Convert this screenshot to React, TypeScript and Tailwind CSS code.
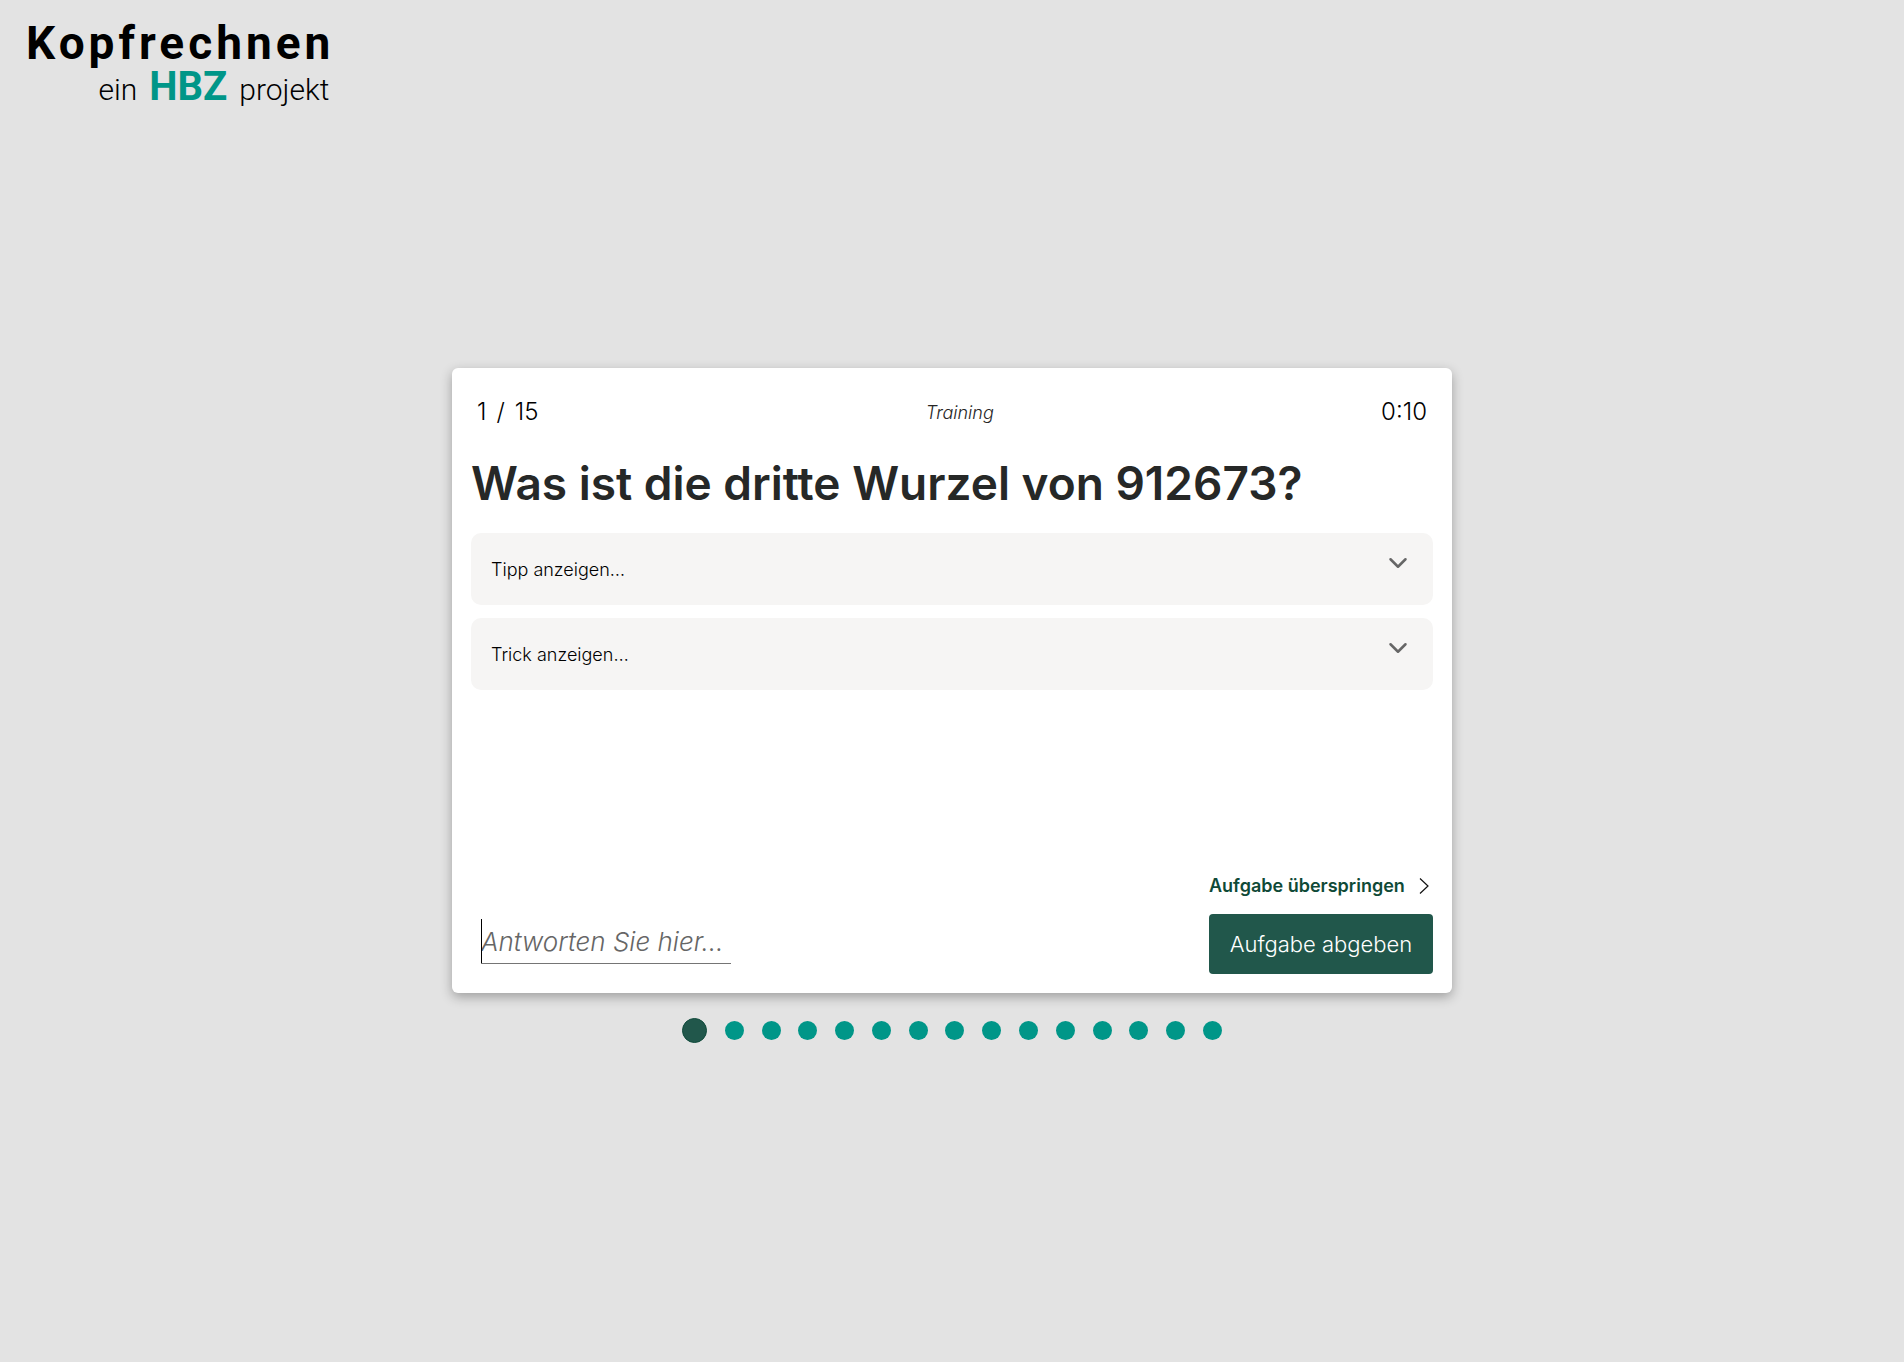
import { ChevronDown } from "lucide-react";

const TASK_COUNT = 15;
const CURRENT_TASK = 1;

function Logo() {
  return (
    <a href="#" className="flex w-fit flex-col items-end pt-[17px] pl-[26px] font-[Roboto,sans-serif] text-black">
      <span className="text-[46px] leading-[52px] font-bold tracking-[4px]">Kopfrechnen</span>
      <span className="flex items-baseline gap-3 pr-[5px] text-[30px] leading-9 font-light">
        ein <strong className="text-[40px] font-bold text-[#009688]">HBZ</strong> projekt
      </span>
    </a>
  );
}

function Hint({ label }: { label: string }) {
  return (
    <button
      type="button"
      aria-expanded="false"
      className="flex h-[72px] w-full items-center justify-between rounded-[10px] bg-[#f6f5f4] px-5 text-left text-[18px] font-light text-black"
    >
      {label}
      <ChevronDown className="mb-3 size-[30px] text-[#666]" strokeWidth={2} />
    </button>
  );
}

export default function App() {
  return (
    <div className="grid min-h-screen grid-rows-[1fr_auto_1fr] justify-items-center bg-[#e3e3e3] pb-px font-[Inter,sans-serif]">
      <header className="w-full">
        <Logo />
      </header>

      <main className="flex min-h-[625px] w-full max-w-[1000px] flex-col rounded-md bg-white p-[19px] shadow-[0_4px_12px_rgba(0,0,0,0.3)]">
        <div className="flex h-[50px] items-center justify-between px-1.5 text-[24px] font-light text-black">
          <span className="flex gap-2.5">
            <span>{CURRENT_TASK}</span>
            <span>/</span>
            <span>{TASK_COUNT}</span>
          </span>
          <em className="text-[18px] text-[#262626]">Training</em>
          <time>0:10</time>
        </div>

        <h1 className="pt-4 text-[46px] leading-[60px] font-semibold text-[#262827]">
          Was ist die dritte Wurzel von 912673?
        </h1>

        <div className="mt-5 flex flex-col gap-[13px]">
          <Hint label="Tipp anzeigen…" />
          <Hint label="Trick anzeigen…" />
        </div>

        <form className="mt-auto flex items-end justify-between" onSubmit={(e) => e.preventDefault()}>
          <div className="relative mb-2.5 ml-2.5">
            <input
              type="text"
              aria-label="Antwort"
              placeholder="Antworten Sie hier…"
              className="h-[45px] w-[250px] border-b border-[#757575] bg-transparent text-[26px] font-light italic outline-none placeholder:text-[#666]"
            />
            <span className="absolute top-0 left-0 h-11 w-px bg-black" />
          </div>
          <div className="flex flex-col gap-3">
            <button type="button" className="flex items-center justify-between pr-1 text-[18px] leading-8 font-semibold text-[#0f4a37]">
              Aufgabe überspringen
              <svg viewBox="0 0 10 18" className="h-[18px] w-2.5" fill="none" stroke="#111" strokeWidth="1.2">
                <path d="M1 1.5 9 9 1 16.5" />
              </svg>
            </button>
            <button type="submit" className="h-[60px] w-[224px] rounded bg-[#21574b] text-[22px] font-light text-white">
              Aufgabe abgeben
            </button>
          </div>
        </form>
      </main>

      <nav aria-label="Aufgaben" className="mt-[25px] flex h-[25px] w-[540px] items-center justify-between">
        {Array.from({ length: TASK_COUNT }, (_, i) => i + 1).map((n) => (
          <button
            key={n}
            type="button"
            aria-label={`Aufgabe ${n}`}
            className={
              n === CURRENT_TASK
                ? "size-[25px] rounded-full border border-[#0f4a3b] bg-[#21574b]"
                : "size-[19px] rounded-full bg-[#009688]"
            }
          />
        ))}
      </nav>
    </div>
  );
}
